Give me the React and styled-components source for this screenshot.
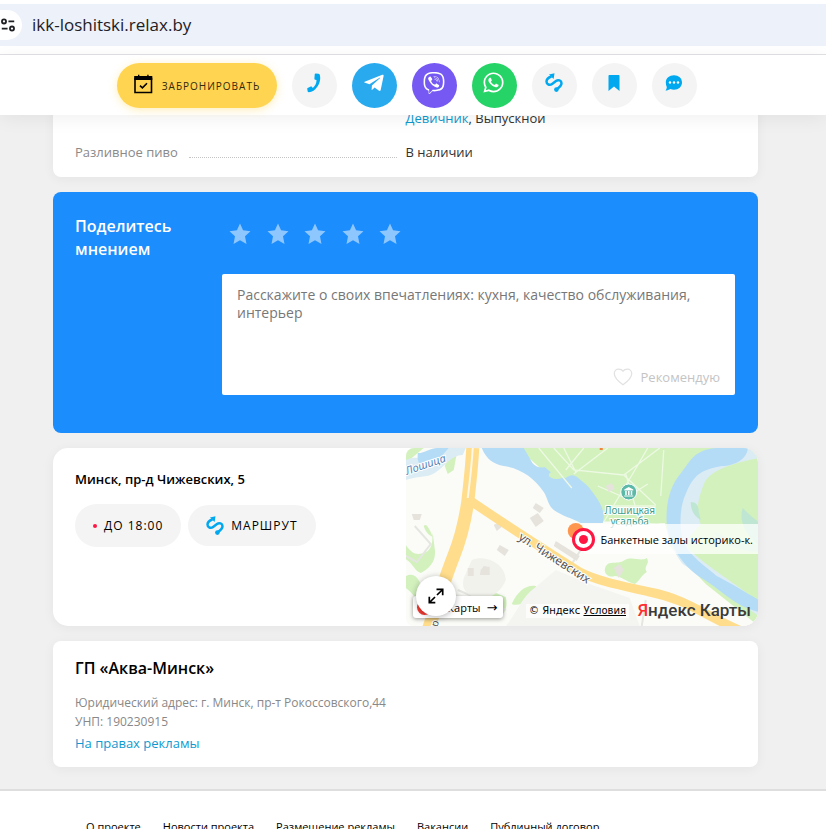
import React from 'react';
import styled, { createGlobalStyle, css } from 'styled-components';
import { FaTelegramPlane, FaViber, FaWhatsapp } from 'react-icons/fa';

const GlobalStyle = createGlobalStyle`
  * {
    box-sizing: border-box;
  }

  body {
    margin: 0;
    background: #f0f0f0;
    color: #000;
    font-family: "Open Sans", "Noto Sans", sans-serif;
    font-size: 13px;
  }

  button, textarea, input {
    font-family: inherit;
  }

  a {
    color: #0e9ad0;
    text-decoration: none;
  }
`;

const Page = styled.div`
  height: 100vh;
  overflow: hidden;
`;

/* ---------- browser bar ---------- */

const BrowserBar = styled.div`
  padding: 4px 0 8px;
  background: #fff;
  border-bottom: 1px solid #dfe1e5;
`;

const Omnibox = styled.div`
  display: flex;
  align-items: center;
  gap: 10px;
  height: 42px;
  background: #ecf1fa;
  overflow: hidden;
`;

const SiteInfo = styled.button`
  display: flex;
  align-items: center;
  justify-content: flex-end;
  width: 22px;
  height: 30px;
  padding: 0 6px 0 0;
  border: 0;
  border-radius: 0 15px 15px 0;
  background: #fff;
`;

const Address = styled.input`
  flex: 1;
  min-width: 0;
  padding: 0;
  border: 0;
  outline: none;
  background: none;
  color: #1f2024;
  font-size: 17px;
  line-height: 24px;
`;

/* ---------- sticky actions ---------- */

const ActionBar = styled.header`
  position: relative;
  z-index: 10;
  display: flex;
  justify-content: center;
  gap: 15px;
  padding: 8px 66px 7px 54px;
  background: #fff;
  box-shadow: 0 4px 18px rgba(0, 0, 0, 0.06);
`;

const BookButton = styled.button`
  display: flex;
  align-items: center;
  justify-content: center;
  gap: 9px;
  width: 160px;
  height: 45px;
  padding: 0;
  border: 0;
  border-radius: 23px;
  background: #ffd450;
  box-shadow: 0 2px 8px rgba(255, 212, 80, 0.4);
  color: #33290d;
  font-size: 10px;
  letter-spacing: 1px;
  text-transform: uppercase;
`;

const RoundLink = styled.a`
  display: flex;
  align-items: center;
  justify-content: center;
  width: 45px;
  height: 45px;
  padding: 0 2px 6px 0;
  border-radius: 50%;
  background: ${({ $bg }) => $bg || '#f4f4f4'};
  color: ${({ $bg }) => ($bg ? '#fff' : '#00a8f0')};
`;

/* ---------- cards ---------- */

const Main = styled.main`
  display: flex;
  flex-direction: column;
  gap: 15px;
  margin-top: -10px;
  padding: 0 68px 22px 53px;
`;

const Card = styled.section`
  border-radius: ${({ $radius }) => $radius || 8}px;
  background: #fff;
  box-shadow: 0 2px 12px rgba(0, 0, 0, 0.05);
  overflow: hidden;
`;

const Facts = styled.dl`
  display: grid;
  grid-template-columns: 1fr 1fr;
  row-gap: 14px;
  margin: 0;
  padding: 3px 0 15px 0;
  line-height: 20px;
`;

const Term = styled.dt`
  display: flex;
  gap: 11px;
  padding: 0 9px 0 22px;
  color: #8a8a8a;

  &:not(:empty)::after {
    content: "";
    flex: 1;
    height: 15px;
    border-bottom: 1px dotted #c4c4c4;
  }
`;

const Value = styled.dd`
  margin: 0;
  color: #333;
`;

const ReviewCard = styled.form`
  display: grid;
  grid-template-columns: 147px 1fr;
  padding: 23px 23px 38px 22px;
  border-radius: 8px;
  background: #1c8dfc;
`;

const ReviewTitle = styled.h2`
  margin: 0;
  color: #fff;
  font-size: 16px;
  font-weight: 600;
  line-height: 23px;
`;

const Rating = styled.fieldset`
  display: flex;
  justify-content: space-between;
  width: 179px;
  margin: 0 0 29px;
  padding: 8px 0 0 7px;
  border: 0;
`;

const Star = styled.label`
  display: flex;
  color: #8ec6fe;
  cursor: pointer;

  & svg {
    display: block;
  }
`;

const hiddenInput = css`
  position: absolute;
  width: 1px;
  height: 1px;
  margin: 0;
  opacity: 0;
`;

const HiddenRadio = styled.input.attrs({ type: 'radio' })`
  ${hiddenInput}
`;

const HiddenCheck = styled.input.attrs({ type: 'checkbox' })`
  ${hiddenInput}
`;

const ReviewBox = styled.div`
  display: flex;
  flex-direction: column;
  height: 121px;
  padding: 12px 15px 8px;
  border-radius: 2px;
  background: #fff;
`;

const ReviewText = styled.textarea`
  flex: 1;
  width: 100%;
  padding: 0;
  border: 0;
  outline: none;
  resize: none;
  font-size: 14px;
  line-height: 18px;

  &::placeholder {
    color: #777;
  }
`;

const Recommend = styled.label`
  display: flex;
  align-items: center;
  align-self: flex-end;
  gap: 8px;
  color: #c4c4c4;
  font-size: 13px;
  line-height: 20px;
`;

const PlaceCard = styled(Card)`
  display: grid;
  grid-template-columns: 1fr 1fr;
  min-height: 178px;
`;

const PlaceInfo = styled.div`
  padding: 21px 22px;
`;

const PlaceTitle = styled.h3`
  margin: 0 0 14px;
  font-size: 13px;
  font-weight: 600;
  line-height: 21px;
`;

const Pills = styled.div`
  display: flex;
  align-items: center;
  gap: 7px;
`;

const Pill = styled.button`
  display: flex;
  align-items: center;
  gap: 7px;
  height: ${({ $height }) => $height || 41}px;
  padding: 0 18px;
  border: 0;
  border-radius: 22px;
  background: #f4f4f4;
  color: #000;
  font-size: 12px;
  letter-spacing: 1px;
  text-transform: uppercase;
`;

const Dot = styled.i`
  width: 4px;
  height: 4px;
  border-radius: 50%;
  background: #ff1744;
`;

const LegalCard = styled(Card)`
  padding: 15px 22px 14px;
`;

const LegalTitle = styled.h3`
  margin: 0 0 13px;
  font-size: 16px;
  font-weight: 600;
  line-height: 24px;
`;

const LegalLine = styled.p`
  margin: 0;
  color: #888;
  font-size: 12px;
  line-height: 19px;
`;

const AdLink = styled.a`
  display: block;
  padding-top: 2px;
  font-size: 13px;
  line-height: 20px;
`;

/* ---------- map ---------- */

const MapFrame = styled.div`
  position: relative;
  border-radius: 8px;
  overflow: hidden;
  background: #fbfcf7;
`;

const MapSvg = styled.svg`
  display: block;
  width: 100%;
  height: 100%;
`;

const MapPin = styled.a`
  position: absolute;
  top: 76px;
  right: 0;
  left: 178px;
  display: flex;
  align-items: center;
  height: 30px;
  padding-left: 17px;
  background: rgba(255, 255, 255, 0.75);
  color: #000;
  font-size: 11px;
  white-space: nowrap;
  overflow: hidden;
`;

const PinMark = styled.span`
  position: absolute;
  top: 80px;
  left: 166px;
  z-index: 1;
  display: flex;
  align-items: center;
  justify-content: center;
  width: 23px;
  height: 23px;
  border: 3px solid #ff1744;
  border-radius: 50%;
  background: #fff;

  &::after {
    content: "";
    width: 9px;
    height: 9px;
    border-radius: 50%;
    background: #ff1744;
  }
`;

const OpenMaps = styled.a`
  position: absolute;
  bottom: 8px;
  left: 7px;
  display: flex;
  align-items: center;
  gap: 6px;
  height: 22px;
  padding: 0 6px 0 4px;
  border-radius: 3px;
  background: #fff;
  box-shadow: 0 1px 4px rgba(0, 0, 0, 0.4);
  color: #000;
  font-size: 11px;

  &::before {
    content: "";
    width: 15px;
    height: 15px;
    border-radius: 50%;
    background: #f43b33;
  }

  & span {
    font-family: "DejaVu Sans", sans-serif;
    font-size: 13px;
  }
`;

const ExpandButton = styled.button`
  position: absolute;
  bottom: 10px;
  left: 10px;
  display: flex;
  align-items: center;
  justify-content: center;
  width: 40px;
  height: 40px;
  padding: 0;
  border: 0;
  border-radius: 50%;
  background: #fff;
  box-shadow: 0 1px 6px rgba(0, 0, 0, 0.3);
`;

const Copyright = styled.div`
  position: absolute;
  right: 129px;
  bottom: 8px;
  padding: 0 3px;
  background: rgba(255, 255, 255, 0.7);
  font-family: "DejaVu Sans", sans-serif;
  font-size: 10px;
  line-height: 14px;
  white-space: nowrap;

  & a {
    color: #000;
    text-decoration: underline;
  }
`;

const YandexLogo = styled.a`
  position: absolute;
  right: 7px;
  bottom: 4px;
  color: #3a3a3a;
  font-family: Roboto, sans-serif;
  font-size: 17px;
  font-weight: 500;
  line-height: 24px;
  white-space: nowrap;

  & span {
    color: #ff2e2e;
  }
`;

/* ---------- footer ---------- */

const Footer = styled.footer`
  padding: 27px 86px;
  border-top: 2px solid #dedede;
  background: #fff;
`;

const FooterNav = styled.nav`
  display: flex;
  gap: 22px;
  white-space: nowrap;

  & a {
    color: #000;
    font-size: 11px;
    line-height: 18px;
  }
`;

/* ---------- icons ---------- */

const TuneIcon = () => (
  <svg width="18" height="18" viewBox="0 0 18 18" fill="none" stroke="#1f2024" strokeWidth="2">
    <circle cx="4.5" cy="5" r="2.3" />
    <path d="M9.5 5H16M2 13h6.5" />
    <circle cx="13.5" cy="13" r="2.3" />
  </svg>
);

const CalendarIcon = () => (
  <svg width="19" height="24" viewBox="0 0 19 24">
    <path d="M1 4.5h16.500v14H1z" fill="none" stroke="#000" strokeWidth="1.6" />
    <path d="M.2 2H4V.8h1.400V2h7.800V.8h1.400V2h3.700v4H.2z" />
    <path d="M6 11.600l2.400 2.300 4.600-4.700" fill="none" stroke="#000" strokeWidth="1.6" />
  </svg>
);

const PhoneIcon = () => (
  <svg width="14" height="20" viewBox="0 0 14 20" fill="currentColor">
    <path d="M8.600.5l2.800.2c.6 0 1 .3 1.300.8 1.700 5.600-.9 12.600-6.200 16.200-1.400.9-3 1.400-4.700 1.500-.6 0-.9-.2-1.100-.7L.3 16.200c-.2-.5 0-.9.4-1.200l3-1.500c.5-.2.9-.1 1.200.3l.9 1.100c2.500-2.100 3.800-4.800 3.700-7.900l-1.300-.2c-.5-.1-.8-.5-.8-1l.3-4.400c0-.6.4-.9.900-.9z" />
  </svg>
);

const RouteIcon = () => (
  <svg width="18" height="20" viewBox="0 0 18 20" fill="none" stroke="#00a8f0" strokeWidth="2.500">
    <path d="M6.500 3.500C3.500 4.500 1.500 6 1.500 8.500c0 3 3.200 4.200 5.600 2.400L11 8c2.200-1.600 5.500-.6 5.500 2.200 0 2.400-2.500 4.400-4.800 6" />
    <path d="M4 1.500L9.500.3 8.600 6z" fill="#00a8f0" stroke="none" />
    <circle cx="11.400" cy="16.600" r="2.300" fill="#00a8f0" stroke="none" />
  </svg>
);

const BookmarkIcon = () => (
  <svg width="12" height="16" viewBox="0 0 12 16" fill="currentColor">
    <path d="M1.500 0h9c.6 0 1 .4 1 1v15L6 11.500.500 16V1c0-.6.4-1 1-1z" />
  </svg>
);

const ChatIcon = () => (
  <svg width="18" height="16" viewBox="0 0 18 16">
    <path
      d="M9 .3c4.600 0 8 3.100 8 7.200s-3.400 7.200-8 7.200c-1.300 0-2.500-.2-3.600-.7-1.200.9-3 1.500-4.900 1.500.8-1 1.300-2.300 1.300-3.500C1.200 10.700.8 9.200.8 7.500.8 3.400 4.400.3 9 .3z"
      fill="currentColor"
    />
    <g fill="#fff">
      <circle cx="5" cy="7.500" r="1.200" />
      <circle cx="9" cy="7.500" r="1.200" />
      <circle cx="13" cy="7.500" r="1.200" />
    </g>
  </svg>
);

const StarIcon = () => (
  <svg width="22" height="22" viewBox="0 0 22 22" fill="currentColor">
    <path d="M11 .5l3.100 6.800 7.400.9-5.500 5 1.500 7.800-6.500-3.700L4.500 21 6 13.200.5 8.200l7.400-.9z" />
  </svg>
);

const HeartIcon = () => (
  <svg width="20" height="18" viewBox="0 0 20 18" fill="none" stroke="#e2e2e2" strokeWidth="1.300">
    <path d="M10 16.800C5.500 13.500 1.300 9.900 1.300 5.700c0-2.700 1.900-4.500 4.200-4.500 2 0 3.600.4 4.500 1.900.9-1.500 2.500-1.900 4.500-1.900 2.300 0 4.200 1.800 4.200 4.500 0 4.200-4.200 7.800-8.700 11.100z" />
  </svg>
);

const ExpandIcon = () => (
  <svg width="16" height="16" viewBox="0 0 16 16" fill="none" stroke="#000" strokeWidth="1.700">
    <path d="M9 7l5.700-5.500M8.500 1.300h6.200v6M7 9l-5.500 5.500M1.300 8.700v6h6" />
  </svg>
);

const MapPicture = () => (
  <MapSvg viewBox="0 0 353 178" preserveAspectRatio="xMidYMid slice" role="img" aria-label="Карта">
    <rect width="353" height="178" fill="#fbfcf7" />

    {/* parks */}
    <g fill="#d2f1bd">
      <path d="M112 0H353V178L300 136 262 96 215 84 180 74 165 60 140 25z" />
      <path d="M0 0h18L6 10l-6 4zM45 0h7l-4 22-6 4-3-8z" />
      <path d="M0 97c8 12 14 10 22 6 6-6 4-12 5-18l2 16c2 12-6 20-14 24-6-2-8-10-15-14z" />
      <path d="M0 128c8-4 12 2 14 6v20c-6-6-10-12-14-14z" />
      <path d="M68 155c8-18 22-10 32-6 2 8 0 16-6 20-10-2-22-6-26-14zM106 156c6-14 16-20 24-18 4 4-2 12-8 16-6 2-12 4-16 2z" />
      <path d="M199 122c2-12 12-4 20-10 8-4 16 2 22-2 4 6-4 8 0 14-6 4-8 10-12 12-8-2-14-8-20-8-6 2-10-2-10-6z" />
      <path d="M18 78c3-4 7 6 9 11-5-2-8-7-9-11z" />
    </g>
    <path d="M181 75c18-4 60 2 78 0l6 22c-26-2-52-8-72-6z" fill="#fbfcf7" />

    {/* river and ponds */}
    <g fill="#dcecf4">
      <path d="M0 12c12-6 22 2 34-3L42 0h18l-3 7c-12 0-18 12-28 18-8 5-18 3-29 7z" />
      <path d="M328 0h25v10c-20 4-46 10-54 24-6 14-10 30-4 42-6 8-16 14-13 24 18 18 40 30 71 54v14l-76-52c-8-10-20-30-14-50 0-28 20-50 65-66z" />
    </g>
    <g fill="#b5dcf6">
      <path d="M76 0c5 12 12 16 22 18 18 3 30 12 40 26 4 6 4 13 10 18 8 6 18 8 27 13h22c2-6 1-12-3-20-6-10-12-18-18-22-6-6-10-8-16-3-10-2-16-6-21-11-6 2-12-2-14-7l-7-12z" />
      <path d="M12 5c4 1 14-5 19-5h12L35 9c-4 4-14 2-20 8-4-4-3-8-3-12z" />
      <path d="M310 0c-22 2-26 14-34 24-14 16-16 36-15 52 2 24 20 46 38 56 16 10 30 26 54 32v-12c-14-8-26-16-42-24-14-12-24-18-31-30-8-14-6-40 0-52 8-20 16-24 36-28 14 0 26-8 26-18z" />
    </g>
    <ellipse cx="151" cy="27" rx="8" ry="4" fill="#d2f1bd" />
    <path d="M285 54c6 0 8 4 8 10l2 8c-5-3-10-8-10-18zM337 60c4 4 10 10 16 14v24l-8-8c-6-8-12-18-8-30z" fill="#bfe6d2" />
    <path d="M308 84c10 4 20 10 28 8l17 6v6c-20-2-34-4-45-20z" fill="#c6ebcc" />

    {/* park paths */}
    <g fill="none" stroke="#edf9e3" strokeWidth="1.300">
      <path d="M133 0l33 40M148 0l20 22 50 5M158 0l12 24 M178 0l-18 22M168 26l34-26M218 27l36-27M242 0l-14 24-30 50M218 27l32 30M200 58l50 0M230 60l-10-34M258 2l-3 46" />
      <path d="M192 38l28 12 22-14" />
    </g>

    {/* minor roads */}
    <g fill="none" stroke="#e5e6e2" strokeWidth="2">
      <path d="M9 78l16 18-14 18-11-6M52 142l24 10 24 10M166 116l14-22M236 178l4-26" />
    </g>
    <path d="M66 112c14-6 34 4 34 20-4 12-20 24-34 16-8-4-10-10-8-18z" fill="#f2f2ed" />
    <path d="M100 178c10-12 14-24 24-34l26-22 34 14 40 14 10 28z" fill="#f4f5f1" />
    <g fill="#e6e3dd">
      <path d="M62 120h6v8h-6zM75 122l3-4 6 1v8H74zM94 97l9 5-4 6-8-6zM130 55l8 5-4 5-7-5zM124 70l8-5 6 8-8 6z" />
      <path d="M88 77l5-3 3 5-5 4zM208 120l6-4 4 6-5 8zM200 38l6-3 3 6-6 3z" />
      <path d="M6 66h10l-2 6H8zM150 93l24 15-3 5-23-15z" />
    </g>

    {/* highways */}
    <g fill="none" stroke="#ffdd8c">
      <path d="M67 0c-1 20-3 36-5 54-3 20-6 34-14 54-8 20-14 40-25 72" strokeWidth="13" />
      <path d="M62 51C90 70 120 90 174 124c20 10 44 14 70 20 40 8 54 24 94 40" strokeWidth="9" />
    </g>
    <path d="M67 0c-1 18-3 34-5 50" fill="none" stroke="#fff8e4" strokeWidth="2" />

    <g fontFamily="Noto Sans, sans-serif" stroke="#fff" strokeWidth="2" paintOrder="stroke">
      <text x="1" y="27" fontSize="11" fontStyle="italic" fill="#5585b8" transform="rotate(-19 1 27)">Лошица</text>
      <text x="112" y="91" fontSize="12" fill="#555" transform="rotate(33 112 91)">ул. Чижевских</text>
      <text x="30" y="184" fontSize="10" fill="#555" transform="rotate(-72 30 184)">тр</text>
      <g fontSize="10" fill="#3f9d8c" textAnchor="middle">
        <text x="224" y="66">Лошицкая</text>
        <text x="224" y="77">усадьба</text>
      </g>
    </g>

    {/* museum */}
    <circle cx="223" cy="44" r="8" fill="#5cb8a7" stroke="#fff" strokeWidth="1" />
    <path d="M218.500 41.500l4.500-2.500 4.500 2.500v1h-9zM219.500 43h1.500v4h-1.500zM222.300 43h1.500v4h-1.500zM225 43h1.500v4H225zM218.500 47.500h9v1h-9z" fill="#fff" />
    <circle cx="170" cy="83" r="8" fill="#ff9650" />
    <path d="M194 0h3v2h-3z" fill="#f2853c" />
  </MapSvg>
);

const contacts = [
  { label: 'Позвонить', icon: <PhoneIcon /> },
  { label: 'Telegram', bg: '#2aaaee', icon: <FaTelegramPlane size={22} /> },
  { label: 'Viber', bg: '#7559f2', icon: <FaViber size={22} /> },
  { label: 'WhatsApp', bg: '#25d366', icon: <FaWhatsapp size={23} /> },
  { label: 'Маршрут', icon: <RouteIcon /> },
  { label: 'В закладки', icon: <BookmarkIcon /> },
  { label: 'Отзывы', icon: <ChatIcon /> },
];

const footerLinks = ['О проекте', 'Новости проекта', 'Размещение рекламы', 'Вакансии', 'Публичный договор'];

const App = () => (
  <Page>
    <GlobalStyle />
    <BrowserBar>
      <Omnibox>
        <SiteInfo aria-label="Сведения о сайте">
          <TuneIcon />
        </SiteInfo>
        <Address aria-label="Адрес" defaultValue="ikk-loshitski.relax.by" />
      </Omnibox>
    </BrowserBar>

    <ActionBar>
      <BookButton>
        <CalendarIcon />
        Забронировать
      </BookButton>
      {contacts.map(({ label, bg, icon }) => (
        <RoundLink key={label} href="#" aria-label={label} $bg={bg}>
          {icon}
        </RoundLink>
      ))}
    </ActionBar>

    <Main>
      <Card>
        <Facts>
          <Term />
          <Value><a href="#">Девичник</a>, Выпускной</Value>
          <Term>Разливное пиво</Term>
          <Value>В наличии</Value>
        </Facts>
      </Card>

      <ReviewCard>
        <ReviewTitle>Поделитесь мнением</ReviewTitle>
        <div>
          <Rating aria-label="Оценка">
            {[1, 2, 3, 4, 5].map(n => (
              <Star key={n}>
                <HiddenRadio name="rating" value={n} aria-label={`${n} из 5`} />
                <StarIcon />
              </Star>
            ))}
          </Rating>
          <ReviewBox>
            <ReviewText
              aria-label="Отзыв"
              placeholder="Расскажите о своих впечатлениях: кухня, качество обслуживания, интерьер"
            />
            <Recommend>
              <HiddenCheck name="recommend" />
              <HeartIcon />
              Рекомендую
            </Recommend>
          </ReviewBox>
        </div>
      </ReviewCard>

      <PlaceCard $radius={15}>
        <PlaceInfo>
          <PlaceTitle>Минск, пр-д Чижевских, 5</PlaceTitle>
          <Pills>
            <Pill $height={43}>
              <Dot />
              До 18:00
            </Pill>
            <Pill>
              <RouteIcon />
              Маршрут
            </Pill>
          </Pills>
        </PlaceInfo>
        <MapFrame>
          <MapPicture />
          <PinMark />
          <MapPin href="#">Банкетные залы историко-к.</MapPin>
          <OpenMaps href="#">Я.Карты <span>→</span></OpenMaps>
          <ExpandButton aria-label="Развернуть карту">
            <ExpandIcon />
          </ExpandButton>
          <Copyright>© Яндекс <a href="#">Условия</a></Copyright>
          <YandexLogo href="#"><span>Я</span>ндекс Карты</YandexLogo>
        </MapFrame>
      </PlaceCard>

      <LegalCard>
        <LegalTitle>ГП «Аква-Минск»</LegalTitle>
        <LegalLine>Юридический адрес: г. Минск, пр-т Рокоссовского,44</LegalLine>
        <LegalLine>УНП: 190230915</LegalLine>
        <AdLink href="#">На правах рекламы</AdLink>
      </LegalCard>
    </Main>

    <Footer>
      <FooterNav>
        {footerLinks.map(link => <a key={link} href="#">{link}</a>)}
      </FooterNav>
    </Footer>
  </Page>
);

export default App;
